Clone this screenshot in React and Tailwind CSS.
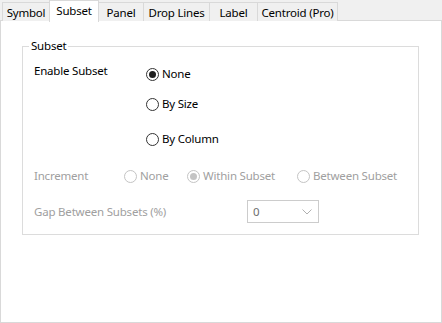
import React from "react";

const font = { fontFamily: '"Noto Sans", "Open Sans", sans-serif' };

function Radio({ checked, disabled }) {
  return (
    <span
      className={
        "flex h-[13px] w-[13px] shrink-0 items-center justify-center rounded-full border bg-white " +
        (disabled ? "border-[#c4c4c4]" : "border-[#333333]")
      }
    >
      {checked && (
        <span
          className={
            "h-[7px] w-[7px] rounded-full " +
            (disabled ? "bg-[#c4c4c4]" : "bg-[#1f1f1f]")
          }
        />
      )}
    </span>
  );
}

function RadioItem({ label, checked, disabled, className = "" }) {
  return (
    <div className={"flex h-[16px] items-center gap-[3px] " + className}>
      <Radio checked={checked} disabled={disabled} />
      <span className={disabled ? "text-[#a0a0a0]" : "text-black"}>{label}</span>
    </div>
  );
}

const tabs = [
  { name: "Symbol", w: "w-[48px]" },
  { name: "Subset", w: "w-[50px]", active: true },
  { name: "Panel", w: "w-[46px]" },
  { name: "Drop Lines", w: "w-[67px]" },
  { name: "Label", w: "w-[49px]" },
  { name: "Centroid (Pro)", w: "w-[81px]" },
];

export default function App() {
  return (
    <div
      className="relative h-[323px] w-[442px] overflow-hidden bg-[#f0f0f0] text-[11.5px] leading-[16px] tracking-[-0.2px] text-black"
      style={font}
    >
      <div className="relative z-10 flex h-[21px] items-end pl-[2px]">
        {tabs.map((t, i) =>
          t.active ? (
            <div
              key={t.name}
              className={
                t.w +
                " -mb-px flex h-[22px] items-start justify-center border border-b-0 border-[#d9d9d9] bg-white pt-[2px] -ml-px"
              }
            >
              {t.name}
            </div>
          ) : (
            <div
              key={t.name}
              className={
                t.w +
                " flex h-[19px] items-center justify-center border border-b-0 border-[#d9d9d9] bg-[#f0f0f0] pt-[1px] " +
                (i === 0 ? "" : "-ml-px")
              }
            >
              {t.name}
            </div>
          )
        )}
      </div>
      <div className="-mt-px h-[303px] w-[442px] border border-[#d9d9d9] bg-white pl-[21px] pt-[25px]">
        <div className="relative h-[189px] w-[397px] border border-[#dcdcdc] pl-[11px] pt-[16px]">
          <span className="absolute left-[6px] top-[-9px] bg-white px-[2px]">Subset</span>
          <div className="flex">
            <div className="w-[112px]">Enable Subset</div>
            <div className="mt-[3px] flex flex-col">
              <RadioItem label="None" checked />
              <RadioItem label="By Size" className="mt-[14px]" />
              <RadioItem label="By Column" className="mt-[19px]" />
            </div>
          </div>
          <div className="mt-[21px] flex h-[16px] items-center">
            <div className="w-[90px] text-[#a0a0a0]">Increment</div>
            <RadioItem label="None" disabled className="w-[63px]" />
            <RadioItem label="Within Subset" disabled checked className="w-[110px]" />
            <RadioItem label="Between Subset" disabled />
          </div>
          <div className="mt-[16px] flex h-[23px] items-center">
            <div className="w-[213px] text-[#a0a0a0]">Gap Between Subsets (%)</div>
            <div className="flex h-[23px] w-[72px] items-center justify-between border border-[#cccccc] bg-white pl-[5px] pr-[6px]">
              <span className="text-[#6d6d6d]">0</span>
              <svg width="10" height="6" viewBox="0 0 10 6" fill="none">
                <path d="M0.5 0.5 L5 5 L9.5 0.5" stroke="#b0b0b0" strokeWidth="1" />
              </svg>
            </div>
          </div>
        </div>
      </div>
    </div>
  );
}
